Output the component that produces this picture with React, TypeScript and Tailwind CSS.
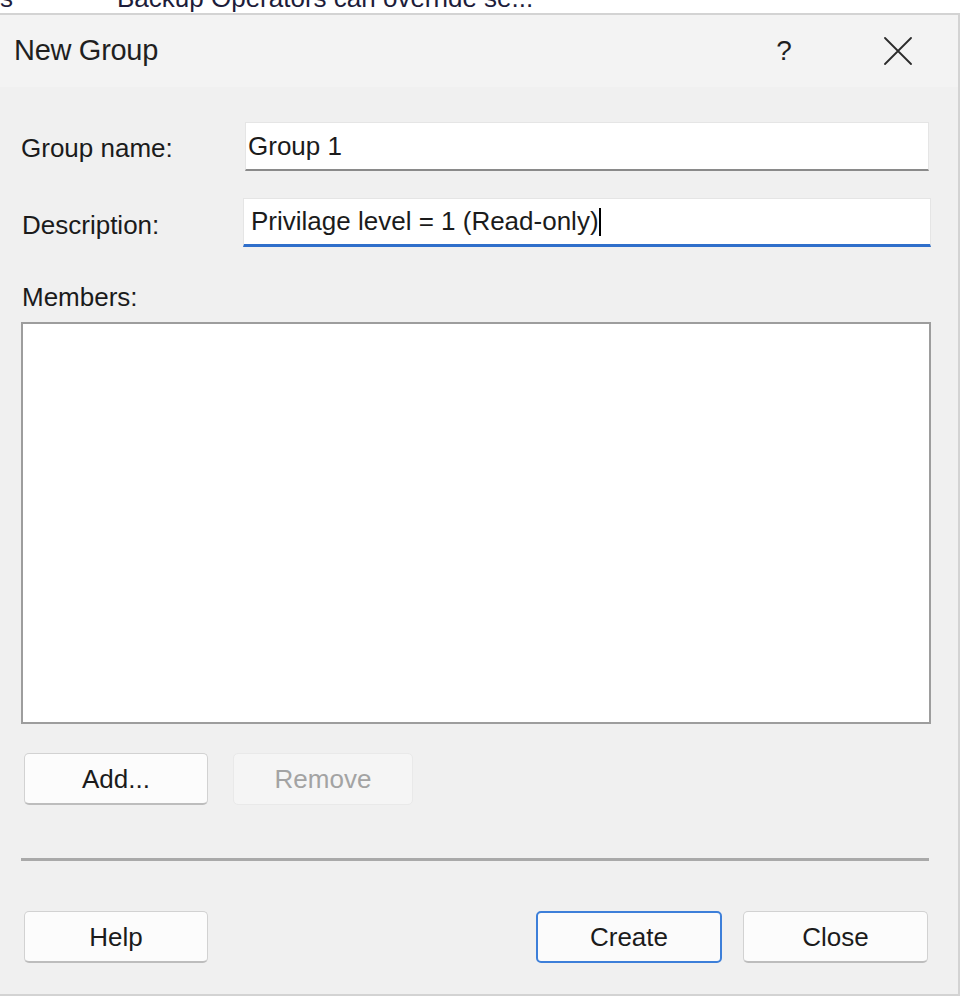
// "New Group" dialog, Windows local users & groups style.

const font = "font-['Liberation_Sans',Arial,sans-serif]";

function DialogButton({
  label,
  variant = "normal",
  className = "",
}: {
  label: string;
  variant?: "normal" | "primary" | "disabled";
  className?: string;
}) {
  const look =
    variant === "primary"
      ? "border-2 border-[#3d7fd9] bg-[#fbfbfb] text-[#1b1b1b]"
      : variant === "disabled"
        ? "border border-[#e9e9e9] bg-[#f5f5f5] text-[#a3a3a3]"
        : "border border-[#d2d2d2] border-b-2 border-b-[#bdbdbd] bg-[#fcfcfc] text-[#1b1b1b]";
  return (
    <button
      type="button"
      className={`h-[52px] rounded-[5px] text-[26px] leading-none flex items-center justify-center ${look} ${className}`}
    >
      {label}
    </button>
  );
}

export default function App() {
  return (
    <div className={`w-[966px] h-[1002px] bg-white overflow-hidden ${font}`}>
      {/* list row peeking out above the dialog */}
      <div className="h-[13px] overflow-hidden flex text-[26px] leading-[26px] text-[#1d1d3a]">
        <span className="mt-[-15px] w-[117px] shrink-0">s</span>
        <span className="mt-[-15px] whitespace-nowrap">Backup Operators can override se...</span>
      </div>

      <div className="w-[960px] h-[983px] border-t-2 border-r-2 border-b-2 border-[#d3d3d3] bg-[#f0f0f0] flex flex-col">
        {/* title bar */}
        <div className="h-[72px] bg-[#f3f3f3] flex items-center pl-[14px] pr-[46px]">
          <span className="text-[29px] tracking-[-0.3px] text-[#1f1f1f]">New Group</span>
          <div className="flex-1" />
          <span className="w-[24px] text-center text-[28px] text-[#1f1f1f]">?</span>
          <svg className="ml-[88px]" width="28" height="28" viewBox="0 0 28 28" fill="none">
            <path d="M1 1 L27 27 M27 1 L1 27" stroke="#2b2b2b" strokeWidth="1.8" strokeLinecap="round" />
          </svg>
        </div>

        <div className="flex flex-col pl-[21px] pr-[27px]">
          {/* group name */}
          <div className="mt-[35px] flex items-center">
            <span className="w-[224px] shrink-0 text-[26px] text-[#1b1b1b] pt-[4px]">Group name:</span>
            <div className="h-[49px] flex-1 mr-[2px] bg-white border border-[#e5e5e5] border-b-2 border-b-[#8a8a8a] flex items-center pl-[2px] text-[26px] text-[#1b1b1b]">
              Group 1
            </div>
          </div>

          {/* description */}
          <div className="mt-[27px] flex items-center">
            <span className="w-[222px] shrink-0 text-[26px] text-[#1b1b1b] pl-[1px] pt-[6px]">Description:</span>
            <div className="h-[49px] flex-1 bg-white border border-[#e5e5e5] border-b-[3px] border-b-[#2f6fcb] flex items-center pl-[7px] text-[26px] text-[#1b1b1b]">
              Privilage level = 1 (Read-only)
              <span className="inline-block w-[2px] h-[28px] bg-black" />
            </div>
          </div>

          {/* members */}
          <span className="mt-[35px] h-[30px] pl-[1px] text-[26px] leading-[30px] text-[#1b1b1b]">Members:</span>
          <div className="mt-[10px] h-[402px] bg-white border-2 border-[#9d9d9d]" />

          <div className="mt-[29px] flex items-center">
            <DialogButton label="Add..." className="ml-[3px] w-[184px]" />
            <DialogButton label="Remove" variant="disabled" className="ml-[25px] w-[180px]" />
          </div>

          <div className="mt-[53px] h-[3px] mr-[2px] bg-[#a9a9a9]" />

          <div className="mt-[50px] flex items-center">
            <DialogButton label="Help" className="ml-[3px] w-[184px]" />
            <div className="flex-1" />
            <DialogButton label="Create" variant="primary" className="w-[186px]" />
            <DialogButton label="Close" className="ml-[21px] mr-[3px] w-[185px]" />
          </div>
        </div>
      </div>
    </div>
  );
}
